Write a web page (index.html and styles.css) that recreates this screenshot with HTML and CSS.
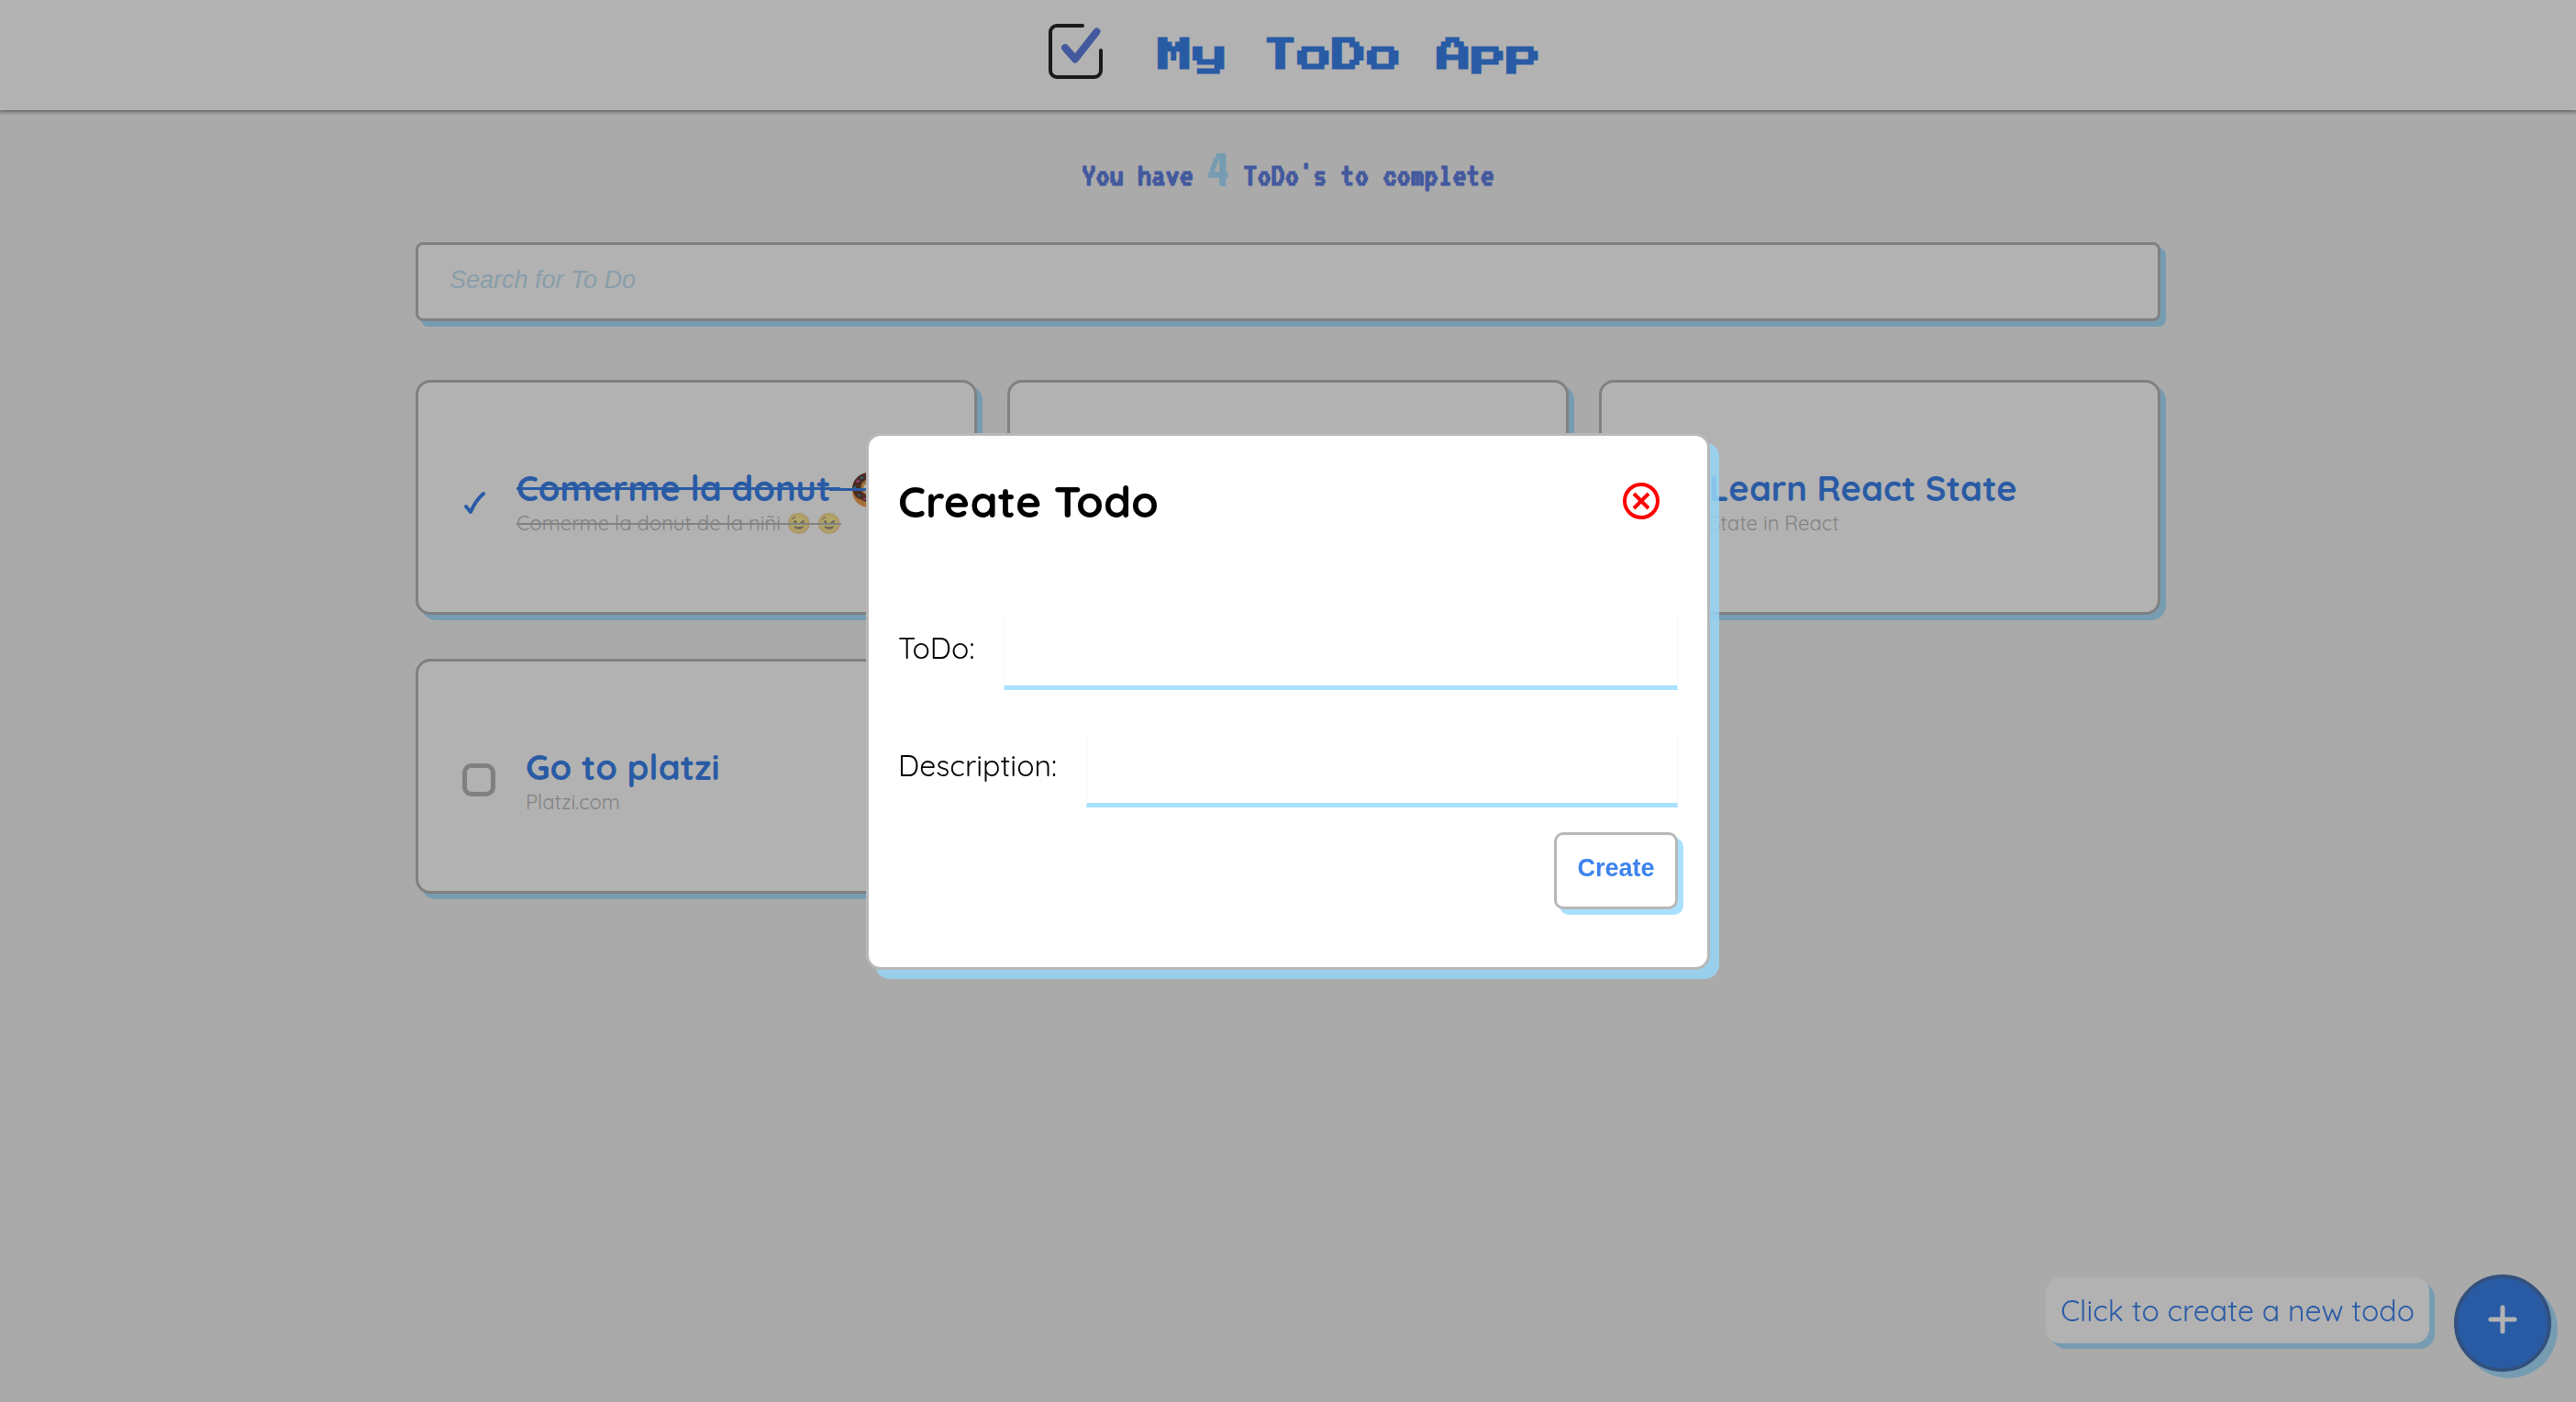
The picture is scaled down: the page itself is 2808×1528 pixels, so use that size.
FILE: index.html
```html
<!DOCTYPE html>
<html lang="en">
<head>
<meta charset="utf-8">
<meta name="viewport" content="width=device-width, initial-scale=1">
<title>My ToDo App</title>
<link rel="stylesheet" href="styles.css">
</head>
<body>
<header class="header">
  <svg class="logo" viewBox="0 0 92 92" fill="none" stroke-linecap="round" aria-hidden="true">
    <path d="M53 18H25a7 7 0 0 0-7 7V67a7 7 0 0 0 7 7h41a7 7 0 0 0 7-7V45" stroke="#262626" stroke-width="4"/>
    <path d="M34 42l11 12.500L68.500 24.500" stroke="#6180e3" stroke-width="8" stroke-linejoin="round"/>
  </svg>
  <h1 class="title">My ToDo App</h1>
</header>

<main class="main">
  <p class="counter">You have <span class="counter-number">4</span> ToDo's to complete</p>
  <input class="search" type="search" placeholder="Search for To Do" aria-label="Search for To Do">

  <section class="cards">
    <article class="card">
      <input class="check" type="checkbox" id="todo-1" checked>
      <div class="card-text done">
        <label class="card-title" for="todo-1">Comerme la donut <span class="donut"><svg viewBox="0 0 40 40" role="img" aria-label="donut">
          <circle cx="20" cy="21" r="19" fill="#f0a050"/>
          <path d="M20 0a20 19 0 0 1 19 18c0 3-2 5-2 8s-4 4-6 6-6 2-9 2-6 0-9-2-7-2-9-6-3-5-3-8A19 19 0 0 1 20 0z" fill="#6b4032"/>
          <circle cx="20" cy="17" r="9" fill="#e9a55c"/>
          <circle cx="20" cy="18" r="6" fill="#fff"/>
          <path d="M6 11l3-2M14 29l2 2M29 9l2 2" stroke="#f062c0" stroke-width="2"/>
          <path d="M11 5l2 2M3 18l2-2M8 26l2 1M33 20v3" stroke="#23a7d8" stroke-width="2"/>
        </svg></span></label>
        <p class="card-note">Comerme la donut de la niñi 😉 😉</p>
      </div>
    </article>
    <article class="card"></article>
    <article class="card">
      <input class="check" type="checkbox" id="todo-3">
      <div class="card-text">
        <label class="card-title" for="todo-3">Learn React State</label>
        <p class="card-note">State in React</p>
      </div>
    </article>
    <article class="card">
      <input class="check" type="checkbox" id="todo-4">
      <div class="card-text">
        <label class="card-title" for="todo-4">Go to platzi</label>
        <p class="card-note">Platzi.com</p>
      </div>
    </article>
  </section>
</main>

<div class="create">
  <span class="hint">Click to create a new todo</span>
  <button class="fab" type="button" aria-label="Create a new todo">
    <svg viewBox="0 0 32 32" fill="none" stroke="#fff" stroke-width="5" stroke-linecap="round"><path d="M16 3v26M3 16h26"/></svg>
  </button>
</div>

<div class="overlay">
  <section class="modal" role="dialog" aria-labelledby="modal-title">
    <div class="modal-head">
      <h2 class="modal-title" id="modal-title">Create Todo</h2>
      <button class="close" type="button" aria-label="Close">
        <svg viewBox="0 0 40 40" fill="none" stroke="#f00"><circle cx="20" cy="20" r="18" stroke-width="4"/><path d="M12 12l16 16M28 12L12 28" stroke-width="4"/></svg>
      </button>
    </div>
    <form class="form">
      <div class="field">
        <label class="label" for="name">ToDo:</label>
        <input class="input" type="text" id="name">
      </div>
      <div class="field">
        <label class="label" for="description">Description:</label>
        <input class="input" type="text" id="description">
      </div>
      <button class="submit" type="button">Create</button>
    </form>
  </section>
</div>
</body>
</html>
```
FILE: styles.css
```css
:root {
  --blue: #3c83ed;
  --sky: #aae0ff;
  --grey: #b8b8b8;
  --text: Quicksand, Lato, sans-serif;
}

* { box-sizing: border-box; }

body {
  margin: 0;
  min-height: 100vh;
  background: #f4f4f4;
  font-family: var(--text);
}

h1, h2, p { margin: 0; }

button, input { font-family: "Liberation Sans", Arial, sans-serif; }

/* Header */
.header {
  display: flex;
  align-items: center;
  justify-content: center;
  gap: 43px;
  height: 120px;
  padding-bottom: 8px;
  background: #fff;
  box-shadow: 0 1px 4px 1px #888;
}

.logo { width: 92px; height: 92px; }

.title {
  padding-top: 10px;
  color: var(--blue);
  font: 700 38px/64px "Press Start 2P", "DejaVu Sans Mono", monospace;
}

/* Content */
.main {
  max-width: 1902px;
  margin: 0 auto;
  padding-top: 34px;
}

.counter {
  color: #6180e3;
  font: 700 38px/60px VT323, "Liberation Mono", monospace;
  text-align: center;
}

.counter-number { color: var(--sky); font-size: 60px; }

.search {
  display: block;
  width: 100%;
  height: 86px;
  margin: 43px 0 64px;
  padding: 0 34px 4px;
  border: 3px solid var(--grey);
  border-radius: 8px;
  background: #fff;
  box-shadow: 6px 6px var(--sky);
  font-size: 27px;
}

.search::placeholder { color: #c5e3f3; font-style: italic; }

.cards {
  display: grid;
  grid-template-columns: repeat(3, 1fr);
  gap: 48px 33px;
}

.card {
  display: flex;
  align-items: center;
  gap: 33px;
  min-height: 256px;
  padding: 58px 48px 50px;
  border: 3px solid var(--grey);
  border-radius: 16px;
  background: #fff;
  box-shadow: 6px 6px var(--sky);
}

.check {
  appearance: none;
  flex: none;
  width: 36px;
  height: 36px;
  margin: 0;
  border: 5px solid var(--grey);
  border-radius: 10px;
}

.check:checked {
  width: 26px;
  border: 0;
  background: url("data:image/svg+xml,%3Csvg xmlns='http://www.w3.org/2000/svg' viewBox='0 0 26 36'%3E%3Cpath d='M4 24l5 6c3-7 7-14 14-20' fill='none' stroke='%233c83ed' stroke-width='4' stroke-linecap='round' stroke-linejoin='round'/%3E%3C/svg%3E") center / 26px 36px no-repeat;
}

.card-text { flex: 1; }

.card-title {
  display: block;
  color: var(--blue);
  font-size: 38px;
  font-weight: 700;
  line-height: 48px;
  white-space: nowrap;
}

.card-note {
  color: #777;
  font-size: 22px;
  line-height: 28px;
  opacity: .5;
}

.done .card-title, .done .card-note { text-decoration: line-through; }

/* The strike has to run over the picture as well */
.donut {
  position: relative;
  display: inline-block;
  width: 38px;
  height: 38px;
  margin-left: 12px;
  vertical-align: -7px;
}

.donut svg { display: block; width: 38px; height: 38px; }

.donut::after {
  content: "";
  position: absolute;
  inset: 17px 0 auto -24px;
  height: 3px;
  background: var(--blue);
}

/* Create button */
.create {
  position: fixed;
  right: 27px;
  bottom: 33px;
  display: flex;
  align-items: flex-start;
  gap: 27px;
}

.hint {
  margin-top: 3px;
  padding: 0 16px;
  border-radius: 16px;
  background: #fff;
  box-shadow: 6px 6px var(--sky);
  color: var(--blue);
  font-size: 32px;
  line-height: 72px;
}

.fab {
  display: flex;
  align-items: center;
  justify-content: center;
  width: 106px;
  height: 106px;
  padding: 0 0 8px;
  border: 4px solid #4a74b5;
  border-radius: 50%;
  background: var(--blue);
  box-shadow: 7px 7px var(--sky);
}

.fab svg { width: 32px; height: 32px; }

/* Modal */
.overlay {
  position: fixed;
  inset: 0;
  display: flex;
  align-items: center;
  justify-content: center;
  background: rgba(0, 0, 0, .3);
}

.modal {
  width: 920px;
  padding: 39px 32px 63px;
  border: 3px solid var(--grey);
  border-radius: 16px;
  background: #fff;
  box-shadow: 10px 10px rgba(151, 213, 246, .85);
}

.modal-head {
  display: flex;
  align-items: center;
  justify-content: space-between;
  padding-right: 20px;
}

.modal-title { font-size: 48px; line-height: 64px; }

.close { padding: 0; border: 0; background: none; }

.close svg { display: block; width: 40px; height: 40px; }

.form {
  display: flex;
  flex-direction: column;
  gap: 48px;
  margin-top: 94px;
}

.field { display: flex; align-items: center; gap: 32px; }

.label {
  padding-bottom: 12px;
  font-size: 32px;
}

.input {
  flex: 1;
  min-width: 0;
  height: 80px;
  border: 1px solid #eef9ff;
  border-width: 0 1px 5px;
  border-bottom-color: var(--sky);
  background: #fff;
  font-size: 27px;
}

.submit {
  align-self: flex-end;
  width: 135px;
  height: 84px;
  margin-top: -21px;
  padding: 0 0 4px;
  border: 3px solid var(--grey);
  border-radius: 10px;
  background: #fff;
  box-shadow: 6px 6px var(--sky);
  color: var(--blue);
  font-size: 27px;
  font-weight: 700;
}
```
